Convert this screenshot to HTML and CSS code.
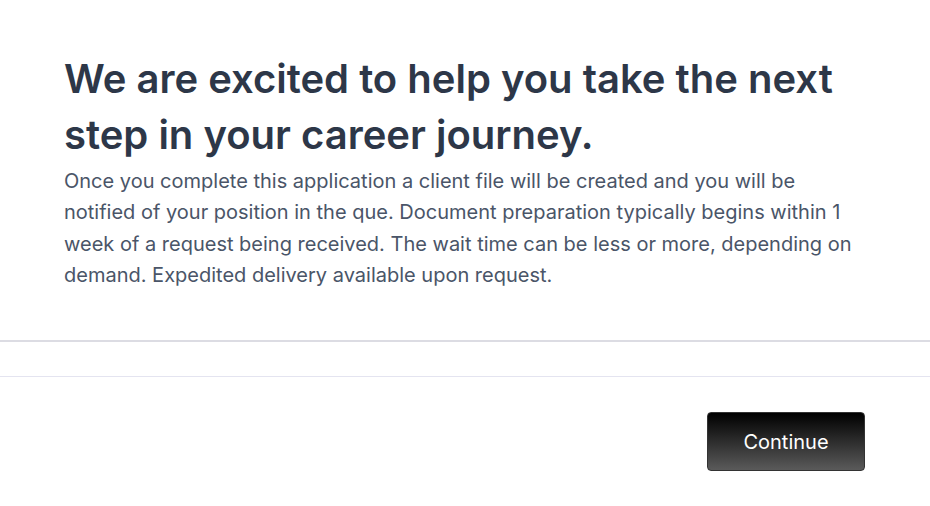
FILE: index.html
```html
<!DOCTYPE html>
<html lang="en">
<head>
    <meta charset="UTF-8">
    <meta name="viewport" content="width=device-width, initial-scale=1.0">
    <title>Application</title>
    <link rel="stylesheet" href="styles.css">
</head>
<body>
    <div class="intro">
        <h1>We are excited to help you take the next step in your career journey.</h1>
        <p>Once you complete this application a client file will be created and you will be notified of your position in the que. Document preparation typically begins within 1 week of a request being received. The wait time can be less or more, depending on demand. Expedited delivery available upon request.</p>
    </div>
    <hr class="divider">
    <div class="actions">
        <button class="continue">Continue</button>
    </div>
</body>
</html>
```

FILE: styles.css
```css
body {
    margin: 0;
    font-family: Inter, "Noto Sans", sans-serif;
    background: #fff;
}
.intro {
    padding: 51px 64px 0 64px;
    height: 342px;
    box-sizing: border-box;
    border-bottom: 2px solid #dcdce3;
}
h1 {
    margin: 0;
    font-size: 40px;
    line-height: 56px;
    font-weight: 600;
    color: #2d3748;
    max-width: 790px;
}
p {
    margin: 3px 0 0 0;
    font-size: 20px;
    line-height: 31.3px;
    color: #4a5568;
    max-width: 800px;
}
.divider {
    margin: 34px 0 0 0;
    border: 0;
    border-top: 1px solid #e4e4f0;
}
.actions {
    display: flex;
    justify-content: flex-end;
    padding: 35px 65px 0 0;
}
.continue {
    width: 158px;
    height: 59px;
    font-family: Inter, "Noto Sans", sans-serif;
    font-size: 20px;
    color: #fff;
    background: linear-gradient(#000, #5a5a5a);
    border: 1px solid #333;
    border-radius: 4px;
}
```
